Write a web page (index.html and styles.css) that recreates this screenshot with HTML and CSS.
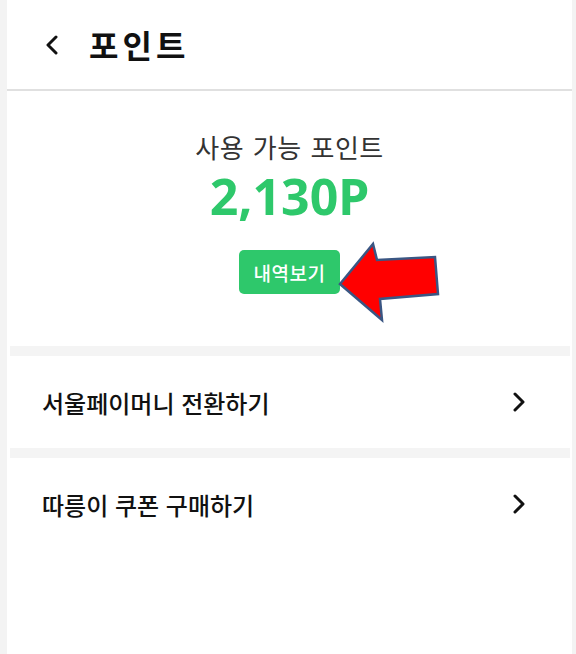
FILE: index.html
```html
<!DOCTYPE html>
<html lang="ko">
<head>
<meta charset="utf-8">
<title>포인트</title>
<link rel="stylesheet" href="styles.css">
</head>
<body>
<div class="app">
  <header class="header">
    <svg class="back" width="16" height="20" viewBox="0 0 16 20"><path d="M12 2 L4 10 L12 18" fill="none" stroke="#111" stroke-width="3" stroke-linecap="round" stroke-linejoin="round"/></svg>
    <h1 class="title">포인트</h1>
  </header>
  <section class="points">
    <div class="label">사용 가능 포인트</div>
    <div class="amount">2,130P</div>
    <button class="history">내역보기</button>
  </section>
  <div class="band"></div>
  <div class="row">
    <span class="row-text">서울페이머니 전환하기</span>
    <svg class="chev" width="14" height="20" viewBox="0 0 14 20"><path d="M3 2 L11 10 L3 18" fill="none" stroke="#111" stroke-width="3" stroke-linecap="round" stroke-linejoin="round"/></svg>
  </div>
  <div class="band"></div>
  <div class="row">
    <span class="row-text">따릉이 쿠폰 구매하기</span>
    <svg class="chev" width="14" height="20" viewBox="0 0 14 20"><path d="M3 2 L11 10 L3 18" fill="none" stroke="#111" stroke-width="3" stroke-linecap="round" stroke-linejoin="round"/></svg>
  </div>
  <svg class="arrow" width="115" height="90" viewBox="0 0 115 90">
    <polygon points="10,47 43,7 47,23 105,20 108,57 50,62 52,83" fill="#ff0000" stroke="#3a5683" stroke-width="2.5" stroke-linejoin="miter"/>
  </svg>
</div>
</body>
</html>
```

FILE: styles.css
```css
* { box-sizing: border-box; }
html, body { margin: 0; padding: 0; }
body {
  background: #f3f3f3;
  font-family: "Noto Sans CJK KR", "Noto Sans", sans-serif;
  color: #111;
}
.app {
  position: relative;
  margin: 0 4px 0 7px;
  background: #fff;
  min-height: 654px;
}
.header {
  height: 91px;
  border-bottom: 2px solid #e0e0e0;
  display: flex;
  align-items: center;
  padding-left: 37px;
  padding-bottom: 2px;
}
.back { display: block; margin-right: 29px; margin-top: 2px; }
.title {
  margin: 0;
  font-size: 32px;
  font-weight: 700;
  letter-spacing: 4px;
  line-height: 1;
}
.points {
  display: flex;
  flex-direction: column;
  align-items: center;
  padding-top: 40px;
  height: 255px;
}
.label {
  font-size: 26px;
  color: #333;
  word-spacing: 1px;
  line-height: 32px;
  letter-spacing: 0.5px;
}
.amount {
  font-size: 50px;
  font-weight: 700;
  color: #2ec86b;
  line-height: 48px;
  margin-top: 9px;
  font-family: "Noto Sans", sans-serif;
}
.history {
  margin-top: 30px;
  width: 101px;
  height: 44px;
  border: none;
  border-radius: 5px;
  background: #2ec86b;
  color: #fff;
  font-family: "Noto Sans CJK KR", sans-serif;
  font-size: 19px;
  font-weight: 500;
  letter-spacing: 0.5px;
  padding: 0;
}
.band {
  height: 10px;
  background: #f4f4f4;
  margin: 0 2px 0 3px;
}
.row {
  height: 92px;
  display: flex;
  align-items: center;
  justify-content: space-between;
  padding: 0 46px 0 35px;
}
.row-text {
  font-size: 24px;
  font-weight: 500;
  color: #111;
  letter-spacing: 0;
}
.chev { display: block; }
.arrow {
  position: absolute;
  left: 323px;
  top: 237px;
}
```
